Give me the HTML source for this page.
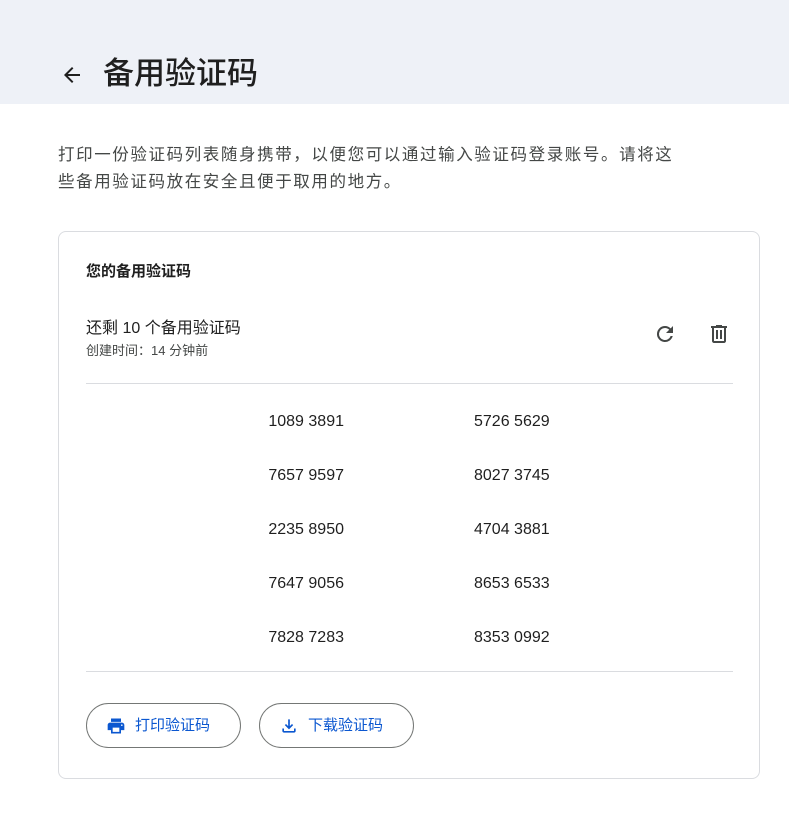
<!DOCTYPE html>
<html><head><meta charset="utf-8"><style>
*{margin:0;padding:0;box-sizing:border-box}
body{width:789px;height:820px;background:#fff;font-family:"Liberation Sans","Noto Sans CJK SC",sans-serif;color:#1f1f1f;position:relative;overflow:hidden}
.hdr{position:absolute;left:0;top:0;width:789px;height:104px;background:#eef1f7}
.t{position:absolute;left:103px;top:52px;font-size:31px;line-height:44px;color:#1f1f1f;font-weight:500}
.desc{position:absolute;left:58px;top:142px;width:720px;font-size:16.5px;line-height:27px;color:#444746;letter-spacing:1.6px;white-space:nowrap}
.card{position:absolute;left:58px;top:231px;width:702px;height:548px;border:1px solid #dadce0;border-radius:8px}
.a{position:absolute;font-size:16px}
.hr{position:absolute;left:27px;width:647px;height:1px;background:#dadce0}
.l{position:absolute;right:415px;font-size:16px;color:#1f1f1f}
.r{position:absolute;left:415px;font-size:16px;color:#1f1f1f}
.btn{position:absolute;top:471px;height:45px;border:1px solid #747775;border-radius:23px;color:#0b57d0;font-size:15px;line-height:43px}
</style></head><body>
<div class="hdr"></div>
<svg style="position:absolute;left:60px;top:63px" width="24" height="24" viewBox="0 0 24 24"><path d="M20 11H7.8l5.6-5.6L12 4l-8 8 8 8 1.4-1.4L7.8 13H20z" fill="#1f1f1f"/></svg>
<div class="t">备用验证码</div>
<div class="desc">打印一份验证码列表随身携带，以便您可以通过输入验证码登录账号。请将这<br>些备用验证码放在安全且便于取用的地方。</div>
<div class="card">
<div class="a" style="left:27px;top:28px;font-size:15px;font-weight:bold">您的备用验证码</div>
<div class="a" style="left:27px;top:82px;font-size:16px">还剩 10 个备用验证码</div>
<div class="a" style="left:27px;top:108px;font-size:13px;color:#444746">创建时间：14 分钟前</div>
<svg style="position:absolute;left:594px;top:90px" width="24" height="24" viewBox="0 0 24 24"><path d="M17.65 6.35A7.96 7.96 0 0 0 12 4a8 8 0 1 0 7.73 10h-2.08A6 6 0 1 1 12 6c1.66 0 3.14.69 4.22 1.78L13 11h7V4z" fill="#444746"/></svg>
<svg style="position:absolute;left:648px;top:90px" width="24" height="24" viewBox="0 0 24 24"><path d="M7 21q-.8 0-1.4-.6T5 19V6H4V4h5V3h6v1h5v2h-1v13q0 .8-.6 1.4T17 21zm10-15H7v13h10zM9 17h2V8H9zm4 0h2V8h-2z" fill="#444746"/></svg>
<div class="hr" style="top:151px"></div>
<div class="l" style="top:181px">1089 3891</div><div class="r" style="top:181px">5726 5629</div>
<div class="l" style="top:235px">7657 9597</div><div class="r" style="top:235px">8027 3745</div>
<div class="l" style="top:289px">2235 8950</div><div class="r" style="top:289px">4704 3881</div>
<div class="l" style="top:343px">7647 9056</div><div class="r" style="top:343px">8653 6533</div>
<div class="l" style="top:397px">7828 7283</div><div class="r" style="top:397px">8353 0992</div>
<div class="hr" style="top:439px"></div>
<div class="btn" style="left:27px;width:155px;padding-left:48px">打印验证码
<svg style="position:absolute;left:19px;top:12px" width="20" height="20" viewBox="0 0 24 24"><path d="M19 8H5c-1.66 0-3 1.34-3 3v6h4v4h12v-4h4v-6c0-1.66-1.34-3-3-3zm-3 11H8v-5h8v5zm3-7c-.55 0-1-.45-1-1s.45-1 1-1 1 .45 1 1-.45 1-1 1zm-1-9H6v4h12V3z" fill="#0b57d0"/></svg></div>
<div class="btn" style="left:200px;width:155px;padding-left:48px">下载验证码
<svg style="position:absolute;left:19px;top:12px" width="20" height="20" viewBox="0 0 24 24"><path d="M12 16l-5-5 1.4-1.45 2.6 2.6V4h2v8.15l2.6-2.6L17 11zm-6 4q-.8 0-1.4-.6T4 18v-3h2v3h12v-3h2v3q0 .8-.6 1.4T18 20z" fill="#0b57d0"/></svg></div>
</div>
</body></html>
